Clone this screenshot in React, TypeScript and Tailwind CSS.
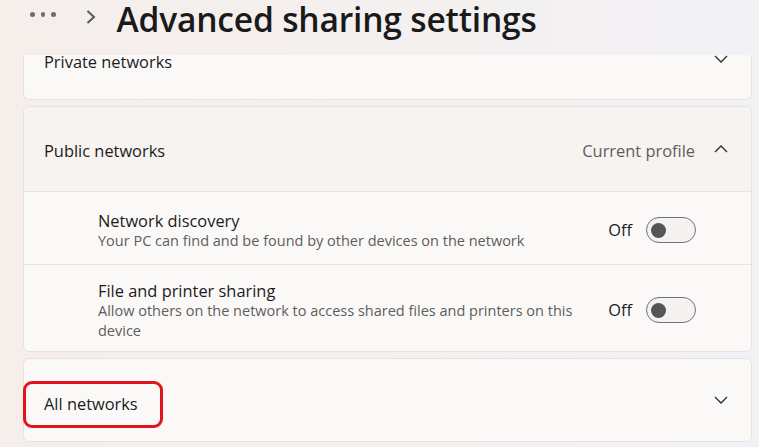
const font = { fontFamily: "'Open Sans', 'Noto Sans', sans-serif" };

function ChevronDownIcon() {
  return (
    <svg width="14" height="8" viewBox="0 0 14 8" className="text-[#2b2b2b]">
      <polyline points="1,1 7,7 13,1" fill="none" stroke="currentColor" strokeWidth="1.3" />
    </svg>
  );
}

function ChevronUpIcon() {
  return (
    <svg width="14" height="8" viewBox="0 0 14 8" className="text-[#2b2b2b]">
      <polyline points="1,7 7,1 13,7" fill="none" stroke="currentColor" strokeWidth="1.3" />
    </svg>
  );
}

function Toggle() {
  return (
    <div className="w-[50px] h-[26px] rounded-full border-[1.5px] border-[#737171] bg-[#f4f2f1] flex items-center pl-[4px]">
      <div className="size-[15px] rounded-full bg-[#565555]" />
    </div>
  );
}

function Row({
  title,
  desc,
  height,
}: {
  title: string;
  desc: string;
  height: string;
}) {
  return (
    <div className={`flex items-center pl-[74px] pr-[55px] border-t border-[#e7e3e1] pt-[4px] ${height}`}>
      <div className="flex-1 flex flex-col pr-6">
        <p className="text-[16.4px] leading-[21px] text-[#1b1b1b]">{title}</p>
        <p className="text-[14.5px] leading-[20px] text-[#5f5d5c]">{desc}</p>
      </div>
      <div className="flex items-center gap-[14px]">
        <span className="text-[16.4px] text-[#1b1b1b]">Off</span>
        <Toggle />
      </div>
    </div>
  );
}

export default function App() {
  return (
    <div
      style={font}
      className="w-[759px] h-[447px] overflow-hidden flex flex-col bg-gradient-to-r from-[#f5eeeb] via-[#f4f0ef] to-[#f2f1f5]"
    >
      {/* header */}
      <div className="h-[55px] shrink-0 flex items-start">
        <div className="flex gap-[6px] ml-[30px] mt-[12px]">
          <span className="size-[4.5px] rounded-full bg-[#6f6c6b]" />
          <span className="size-[4.5px] rounded-full bg-[#6f6c6b]" />
          <span className="size-[4.5px] rounded-full bg-[#6f6c6b]" />
        </div>
        <svg width="10" height="14" viewBox="0 0 10 14" className="ml-[30px] mt-[10px] text-[#5b5959]">
          <polyline points="1.5,1 8,7 1.5,13" fill="none" stroke="currentColor" strokeWidth="2" />
        </svg>
        <h1 className="ml-[21px] mt-[2px] text-[33.6px] leading-[34px] font-semibold text-[#1a1a1a] tracking-[-0.2px]">
          Advanced sharing settings
        </h1>
      </div>

      {/* content */}
      <div className="flex-1 flex flex-col gap-[6px] pl-[23px] pr-[7px]">
        <div className="h-[45px] shrink-0 rounded-b-[6px] border border-t-0 border-[#e6e2e0] bg-[#fbf9f8] flex items-start justify-between pl-[20px] pr-[23px]">
          <span className="text-[16.4px] leading-[14px] text-[#1b1b1b]">Private networks</span>
          <div className="mt-[0px]">
            <ChevronDownIcon />
          </div>
        </div>

        <div className="shrink-0 rounded-[6px] border border-[#e6e2e0] bg-[#fbf9f8] flex flex-col">
          <div className="h-[84px] flex items-center pl-[20px] pr-[23px] bg-[#f7f3f1] rounded-t-[6px]">
            <span className="flex-1 text-[16.4px] text-[#1b1b1b] mt-[5px]">Public networks</span>
            <span className="text-[16.4px] text-[#5f5d5c] mr-[19px] mt-[5px]">Current profile</span>
            <ChevronUpIcon />
          </div>
          <Row
            title="Network discovery"
            desc="Your PC can find and be found by other devices on the network"
            height="h-[73px]"
          />
          <Row
            title="File and printer sharing"
            desc="Allow others on the network to access shared files and printers on this device"
            height="h-[87px]"
          />
        </div>

        <div className="h-[84px] shrink-0 rounded-[6px] border border-[#e6e2e0] bg-[#fbf9f8] flex items-center justify-between pr-[23px]">
          <div className="-ml-[1px] mt-[9px] h-[47px] w-[140px] rounded-[9px] border-[3px] border-[#e0141b] flex items-center pl-[18px]">
            <span className="text-[16.4px] text-[#1b1b1b]">All networks</span>
          </div>
          <ChevronDownIcon />
        </div>
      </div>
    </div>
  );
}
